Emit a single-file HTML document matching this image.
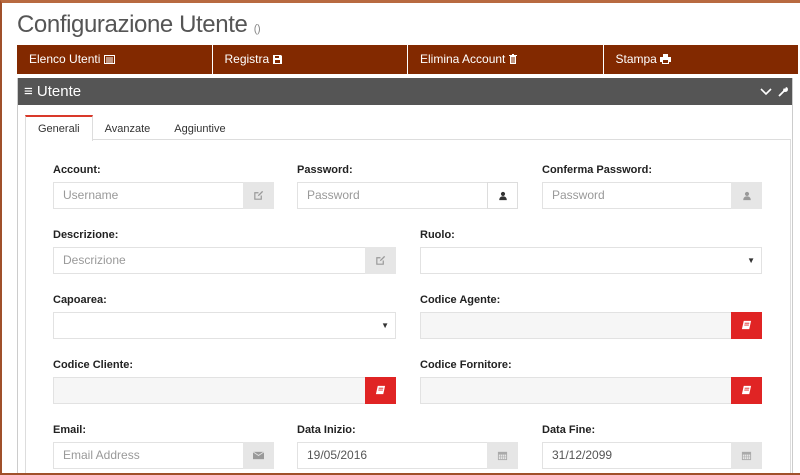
<!DOCTYPE html>
<html><head><meta charset="utf-8"><style>
*{box-sizing:border-box;margin:0;padding:0}
html,body{width:800px;height:475px;overflow:hidden}
body{background:#fff;font-family:"Liberation Sans",Arial,sans-serif;position:relative}
.frame{position:absolute;left:0;top:0;width:800px;height:475px;border-left:2px solid #a0502a;border-top:3px solid #b86a40;border-bottom:2px solid #a0502a;pointer-events:none}
h1{position:absolute;left:17px;top:11px;font-size:24px;font-weight:normal;color:#555;letter-spacing:-0.4px}
h1 small{font-size:11px;color:#888}
.nav{position:absolute;left:17px;top:45px;width:782px;height:29px;display:flex;background:#fff}
.nav div{background:#822900;color:#fff;font-size:12px;line-height:29px;padding-left:12px;margin-right:1px;flex:1}
.nav svg{vertical-align:-1px}
.wid{position:absolute;left:17px;top:78px;width:776px;height:400px;border:1px solid #ccc;border-top:none}
.head{height:27px;background:#555;color:#fff;font-size:15px;line-height:27px;padding-left:6px;position:relative}
.tabs{position:absolute;left:7px;top:37px;height:25px;font-size:11px;color:#333}
.tabs span{display:inline-block;padding:0 12px;line-height:24px}
.tabs .a{border-top:2px solid #d9392a;border-left:1px solid #ddd;border-right:1px solid #ddd;background:#fff;height:26px;position:relative;z-index:2}
.pane{position:absolute;left:7px;top:61px;width:766px;height:340px;border:1px solid #ddd}
.l{position:absolute;font-size:11px;font-weight:bold;color:#222}
.i{position:absolute;height:27px;border:1px solid #e2e2e2;font-size:12px;color:#999;line-height:25px;padding-left:9px;background:#fff}
.i.g{background:#f6f6f6}
.b{position:absolute;right:-1px;top:-1px;width:31px;height:27px;background:#e6e6e6;display:flex;align-items:center;justify-content:center}
.b.r{background:#e02424}
.b.w{background:#fff;border:1px solid #ddd}
.caret{position:absolute;right:6px;top:0;font-size:8px;color:#333}
</style></head><body>
<svg width="0" height="0" style="position:absolute"><defs>
<symbol id="ed" viewBox="0 0 12 12"><path d="M9 6v4H2V3h4" fill="none" stroke="currentColor" stroke-width="1.3"/><path d="M5 7l1-2 4-4 1 1-4 4z" fill="currentColor"/></symbol>
<symbol id="us" viewBox="0 0 12 12"><circle cx="6" cy="3.5" r="2.5" fill="currentColor"/><path d="M1.5 11c0-3 1.5-4.5 4.5-4.5s4.5 1.5 4.5 4.5z" fill="currentColor"/></symbol>
<symbol id="bk" viewBox="0 0 12 12"><path d="M3 1h8l-2 9H1z" fill="#fff"/><path d="M4 3.5h5M3.6 5.5h5" stroke="#e02424" stroke-width="1"/></symbol>
<symbol id="ml" viewBox="0 0 12 12"><path d="M0 2h12v8H0z" fill="currentColor"/><path d="M0 2l6 4 6-4" fill="none" stroke="#e6e6e6" stroke-width="1"/></symbol>
<symbol id="ca" viewBox="0 0 12 12"><path d="M1 2h10v9H1z" fill="currentColor"/><path d="M2 5h8v5H2z" fill="#e6e6e6"/><path d="M4 5v5M6 5v5M8 5v5M2 7.5h8" stroke="currentColor" stroke-width=".6"/></symbol>
</defs></svg>
<h1>Configurazione Utente <small>()</small></h1>
<div class="nav"><div>Elenco Utenti <svg width="11" height="9" viewBox="0 0 11 9"><rect x=".5" y=".5" width="10" height="8" fill="none" stroke="#fff"/><path d="M2 3h7M2 5h7M2 7h7" stroke="#fff"/></svg></div><div>Registra <svg width="9" height="9" viewBox="0 0 9 9"><path d="M0 0h8l1 1v8H0z" fill="#fff"/><path d="M2 1h4v2H2zM2 5h5v3H2z" fill="#822900"/></svg></div><div>Elimina Account <svg width="8" height="10" viewBox="0 0 8 10"><path d="M0 1h8v1H0zM3 0h2v1H3zM1 2h6v8H1z" fill="#fff"/><path d="M3 3v6M5 3v6" stroke="#822900"/></svg></div><div>Stampa <svg width="11" height="10" viewBox="0 0 11 10"><path d="M3 0h5v3H3zM0 3h11v5H9v2H2V8H0z" fill="#fff"/><path d="M3 6h5v3H3z" fill="#822900"/></svg></div></div>
<div class="wid"><div class="head">≡ Utente
<svg style="position:absolute;right:20px;top:10px" width="12" height="8" viewBox="0 0 12 8"><path d="M1 1l5 5 5-5" fill="none" stroke="#fff" stroke-width="1.6"/></svg>
<svg style="position:absolute;right:4px;top:8px" width="10" height="11" viewBox="0 0 10 11"><path d="M1 10l5-5" stroke="#fff" stroke-width="1.8"/><path d="M5 4a2.5 2.5 0 1 0 3-3l-1 2-1-1z" fill="#fff"/></svg>
</div>
<div class="tabs"><span class="a">Generali</span><span>Avanzate</span><span>Aggiuntive</span></div>
<div class="pane"></div></div>

<div class="l" style="left:53px;top:164px">Account:</div>
<div class="i" style="left:53px;top:182px;width:221px">Username<div class="b" style="color:#999"><svg width="11" height="11"><use href="#ed"/></svg></div></div>
<div class="l" style="left:297px;top:164px">Password:</div>
<div class="i" style="left:297px;top:182px;width:221px">Password<div class="b w" style="color:#333"><svg width="10" height="10"><use href="#us"/></svg></div></div>
<div class="l" style="left:542px;top:164px">Conferma Password:</div>
<div class="i" style="left:542px;top:182px;width:220px">Password<div class="b" style="color:#999"><svg width="10" height="10"><use href="#us"/></svg></div></div>

<div class="l" style="left:53px;top:229px">Descrizione:</div>
<div class="i" style="left:53px;top:247px;width:343px">Descrizione<div class="b" style="color:#999"><svg width="11" height="11"><use href="#ed"/></svg></div></div>
<div class="l" style="left:420px;top:229px">Ruolo:</div>
<div class="i" style="left:420px;top:247px;width:342px"><span class="caret">▼</span></div>

<div class="l" style="left:53px;top:294px">Capoarea:</div>
<div class="i" style="left:53px;top:312px;width:343px"><span class="caret">▼</span></div>
<div class="l" style="left:420px;top:294px">Codice Agente:</div>
<div class="i g" style="left:420px;top:312px;width:342px"><div class="b r"><svg width="11" height="11"><use href="#bk"/></svg></div></div>

<div class="l" style="left:53px;top:359px">Codice Cliente:</div>
<div class="i g" style="left:53px;top:377px;width:343px"><div class="b r"><svg width="11" height="11"><use href="#bk"/></svg></div></div>
<div class="l" style="left:420px;top:359px">Codice Fornitore:</div>
<div class="i g" style="left:420px;top:377px;width:342px"><div class="b r"><svg width="11" height="11"><use href="#bk"/></svg></div></div>

<div class="l" style="left:53px;top:424px">Email:</div>
<div class="i" style="left:53px;top:442px;width:221px">Email Address<div class="b" style="color:#999"><svg width="11" height="11"><use href="#ml"/></svg></div></div>
<div class="l" style="left:297px;top:424px">Data Inizio:</div>
<div class="i" style="left:297px;top:442px;width:221px;color:#555">19/05/2016<div class="b" style="color:#aaa"><svg width="11" height="11"><use href="#ca"/></svg></div></div>
<div class="l" style="left:542px;top:424px">Data Fine:</div>
<div class="i" style="left:542px;top:442px;width:220px;color:#555">31/12/2099<div class="b" style="color:#aaa"><svg width="11" height="11"><use href="#ca"/></svg></div></div>
<div class="frame"></div>
</body></html>
